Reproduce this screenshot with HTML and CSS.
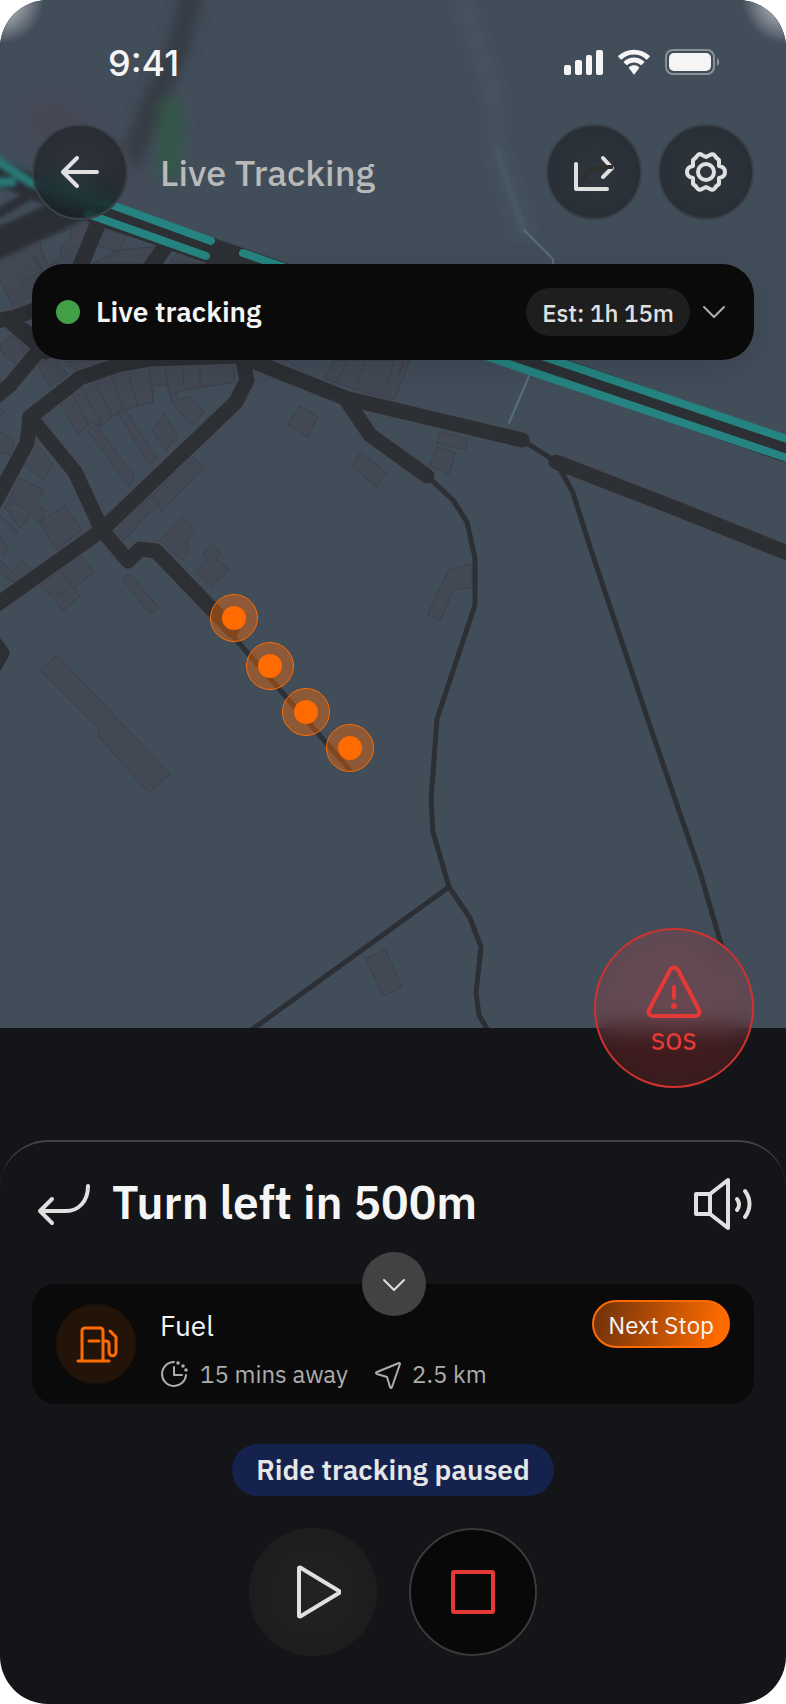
FILE: index.html
```html
<!DOCTYPE html>
<html lang="en">
<head>
<meta charset="utf-8">
<meta name="viewport" content="width=device-width, initial-scale=1">
<title>Live Tracking</title>
<link rel="stylesheet" href="styles.css">
</head>
<body>
<main class="screen">
  <section class="map-area">
    <svg class="map" viewBox="0 0 786 1028" preserveAspectRatio="xMidYMin slice" aria-hidden="true">
      <defs>
        <filter id="soft" x="-30%" y="-30%" width="160%" height="160%"><feGaussianBlur stdDeviation="7"/></filter>
        <filter id="mild" x="-30%" y="-30%" width="160%" height="160%"><feGaussianBlur stdDeviation="2"/></filter>
      </defs>
      <rect width="786" height="1028" fill="#424d5a"/>

      <g class="building">
        <path d="M0 225L60 215L98 222L82 262L70 300L18 316L0 280z"/>
        <path d="M40 240L72 228L70 240L60 246L62 258L48 266L42 252z" fill="#424d5a"/>
        <path d="M10 256L26 250L70 300M22 282L44 270M26 250L20 240M44 276L34 254"/>
        <path d="M100 226L127 236L119 252L98 246M120 250L160 246L148 264L92 264z"/>
        <path d="M170 262L180 250L215 264z"/>
        <path d="M0 345L12 336L28 350L16 364L4 356zM12 336L20 330L32 346L28 350"/>
        <path d="M38 364L50 356L68 374L50 386z"/>
        <path d="M66 362L78 372L104 360z"/>
        <path d="M60 402L82 386L118 372L152 366L235 360L234 382L200 388L185 390L176 392L178 400L188 396L196 402L204 412L192 426L172 402L167 385L153 385L153 402L124 410L110 418L102 426L90 422L78 434z"/>
        <path d="M128 371L138 407M149 367L153 402M165 366L168 388M183 365L184 390M112 377L124 410M96 382L112 418M82 388L102 425M72 394L90 428M200 366L200 386"/>
        <path d="M88 431L96 424L124 463L135 474L129 486z"/>
        <path d="M118 412L124 408L157 458L150 465z"/>
        <path d="M152 430L164 414L178 436L166 450z"/>
        <path d="M28 444L36 444L53 464L44 480L26 466z"/>
        <path d="M20 478L44 490L36 506L46 510L40 522L14 502L4 510L12 494z"/>
        <path d="M4 506L20 528L30 516"/>
        <path d="M40 522L65 505L82 530L56 550z"/>
        <path d="M0 432L14 440L12 456L0 452M0 408L4 412L0 416M0 516L18 532L12 534M0 536L8 548L4 556L0 552"/>
        <path d="M0 560L12 572L22 560L32 570L20 582L12 582L0 572"/>
        <path d="M40 585L80 556L94 572L74 588L80 596L62 612L56 602L68 590L54 598zM62 572L74 588"/>
        <path d="M152 496L192 456L204 467L162 511zM175 472L186 484"/>
        <path d="M112 530L152 496L158 504L124 540z"/>
        <path d="M122 578L130 574L159 608L150 614z"/>
        <path d="M160 540L182 516L196 530L186 542L190 550L182 560z"/>
        <path d="M196 571L207 560L203 554L213 544L220 552L217 560L230 569L212 587z"/>
        <path d="M288 424L299 406L318 416L308 438z"/>
        <path d="M352 466L361 452L387 473L377 487z"/>
        <path d="M440 432L468 439L465 450L437 443zM437 447L456 453L449 474L430 466z"/>
        <path d="M285 360L304 370M324 378L334 360L410 360L394 400L376 396z"/>
        <path d="M336 382L348 360M352 392L366 360M394 360L388 384M404 362L398 376"/>
        <path d="M40 670L57 655L170 774L149 793L98 736L100 730z"/>
        <path d="M449 569L472 564L472 588L454 589L440 621L428 615z"/>
        <path d="M366 958L385 950L402 987L383 996z"/>
      </g>

      <g class="casing">
        <path d="M30 417L80 378L118 365L150 359L240 356L345 398L400 411L522 440M30 417L75 472L102 530L128 560L140 549L156 551L216 614M242 356L247 380L236 402L102 530L-8 608M30 417L27 443L-8 508M345 398L370 435L427 476M556 462L680 510L800 558M-8 395L10 385L40 348L8 318L40 304"/>
      </g>
      <g class="road">
        <path d="M30 417L80 378L118 365L150 359L240 356L345 398L400 411L522 440"/>
        <path d="M242 356L247 380L236 402L102 530L-8 608"/>
        <path d="M30 417L75 472L102 530L128 561L140 549L156 551L232 630"/>
        <path d="M30 417L27 443L-8 508"/>
        <path d="M345 398L370 435L427 476M556 462L680 510L800 558"/>
        <path d="M-8 400L10 385L44 344L8 320L50 304M-8 322L10 318M14 325L46 352"/>
        <path d="M-8 640L2 653L-8 670"/>
      </g>
      <g class="path">
        <path d="M232 635L350 770M522 440L558 463M558 465L573 493L591 550L649 723L700 872L719 937L726 958"/>
        <path d="M427 476L453 500L467 522L475 558L475 605L437 719L431 800L433 832L449 887L470 918L481 947L476 993L479 1015L489 1032M449 887L250 1031"/>
      </g>

      <g filter="url(#soft)">
        <path d="M196 -20L178 48L150 110L126 172" fill="none" stroke="#353a43" stroke-width="22"/>
        <path d="M160 100H185L183 178H157z" fill="#34564a"/>
        <path d="M12 98L60 84L100 112L150 190L130 205L90 170L20 150z" fill="#444a56"/>
      </g>
      <path d="M460 -10L482 60L495 100L497 150L510 190L524 230" fill="none" stroke="#465562" stroke-width="12" filter="url(#soft)"/>
      <path d="M497 150L510 190L524 230" fill="none" stroke="#4a5c68" stroke-width="4" filter="url(#mild)"/>
      <path d="M524 230L553 259V266M529 376L509 423" fill="none" stroke="#557079" stroke-width="2"/>

      <g filter="url(#mild)" fill="none" stroke="#2c2f34">
        <path d="M-20 252L100 196" stroke-width="30"/>
        <path d="M-10 218L60 178" stroke-width="10"/>
        <path d="M-20 165L40 190L110 215" stroke-width="24"/>
      </g>
      <g fill="none" stroke="#2c2f34">
        <path d="M101 216L78 272" stroke-width="16"/>
        <path d="M170 240L146 274" stroke-width="16"/>
        <path d="M96 211L786 449" stroke-width="26"/>
        <path d="M210 244L250 258L240 280L206 270z" fill="#2c2f34"/>
      </g>
      <g fill="none" stroke="#258481" stroke-width="8">
        <path d="M-10 156L30 182L70 196M-10 182L12 182" filter="url(#mild)" stroke="#287a78" stroke-width="9"/>
        <path d="M60 188L112 205L211 241M88 214L206 256M243 253L480 335L790 440M241 272L500 361L790 459"/>
      </g>
    </svg>
    <svg class="stops" viewBox="0 0 786 1028" preserveAspectRatio="xMidYMin slice" role="img" aria-label="Riders on the route">
      <g fill="#ff6b00" fill-opacity=".4" stroke="#ff6b00"><circle cx="234" cy="618" r="23.500"/><circle cx="270" cy="666" r="23.500"/><circle cx="306" cy="712" r="23.500"/><circle cx="350" cy="748" r="23.500"/></g>
      <g fill="#ff6b00"><circle cx="234" cy="618" r="12"/><circle cx="270" cy="666" r="12"/><circle cx="306" cy="712" r="12"/><circle cx="350" cy="748" r="12"/></g>
    </svg>

    <div class="overlay">
      <div class="status">
        <time class="clock">9:41</time>
        <svg width="158" height="28" viewBox="0 0 158 28" fill="#f5f5f5" aria-label="Signal, Wi-Fi and battery">
          <rect x="1" y="16" width="7" height="10" rx="2"/><rect x="12" y="11" width="7" height="15" rx="2"/><rect x="23" y="6" width="6" height="20" rx="2"/><rect x="33" y="1" width="7" height="25" rx="2"/>
          <path d="M71 5.500c4.600 0 8.900 1.800 12.200 4.900.3.200.6.200.9 0l2.600-2.700c.3-.3.300-.7 0-1C78 -1.300 64-1.300 55.300 6.700c-.3.300-.3.700 0 1l2.600 2.700c.3.200.6.200.9 0C62.100 7.300 66.400 5.500 71 5.500zM71 13.500c2.500 0 4.900.9 6.700 2.600.3.200.7.200.9 0l2.500-2.600c.3-.3.300-.7 0-1-5.700-5.300-14.500-5.300-20.200 0-.3.300-.3.700 0 1l2.500 2.600c.2.200.6.200.9 0 1.800-1.700 4.200-2.600 6.700-2.600zM76 18.200c.3.300.3.700 0 1l-4.500 6c-.2.300-.7.300-.9 0l-4.600-6c-.3-.3-.3-.7 0-1 2.900-2.600 7.100-2.600 10 0z"/>
          <rect x="103" y="1" width="48" height="24" rx="7" fill="none" stroke="#f5f5f5" stroke-opacity=".4" stroke-width="2"/>
          <rect x="106" y="4" width="42" height="18" rx="5"/><path d="M154 9v8c3-1.500 3-6.500 0-8z" fill-opacity=".4"/>
        </svg>
      </div>

      <header class="topbar">
        <button class="glass" aria-label="Back"><svg width="40" height="32" viewBox="0 0 40 32"><path d="M37 16H3M17 2L3 16l14 14"/></svg></button>
        <h1 class="title">Live Tracking</h1>
        <button class="glass" aria-label="Share"><svg width="48" height="48" viewBox="0 0 48 48"><path d="M6 16v25h31M33 10l9 10-9 9"/><path d="M13 33c4-10 12-15 30-14" stroke="#302f2e" stroke-linecap="butt"/></svg></button>
        <button class="glass" aria-label="Settings"><svg width="48" height="48" viewBox="0 0 48 48"><circle cx="24" cy="24" r="8"/><path d="M24 9L28 7Q31 5 33 8Q34 10 37 12V18Q43 19 43 24Q43 29 37 30V36Q34 38 33 40Q31 43 28 41L24 39L20 41Q17 43 15 40Q14 38 11 36V30Q5 29 5 24Q5 19 11 18V12Q14 10 15 8Q17 5 20 7z"/></svg></button>
      </header>

      <div class="tracking">
        <span class="dot"></span>
        <h2 class="tracking-label">Live tracking</h2>
        <span class="estimate">Est: 1h 15m</span>
        <button class="expand" aria-label="Show tracking details"><svg width="32" height="32" viewBox="0 0 32 32"><path d="M6 11l10 10 10-10"/></svg></button>
      </div>
    </div>

    <button class="sos">
      <svg width="60" height="56" viewBox="0 0 60 56" aria-hidden="true"><path d="M26 7c2-3.500 6-3.500 8 0l21 40c1.500 3-.5 6-4 6H9c-3.500 0-5.500-3-4-6z"/><path d="M30 24v11"/><circle cx="30" cy="43" r="3" fill="#e53935" stroke="none"/></svg>
      SOS
    </button>
  </section>

  <section class="sheet">
    <div class="turn">
      <svg width="56" height="48" viewBox="0 0 56 48" aria-hidden="true"><path d="M52 6c0 16-10 25-22 25H4M16 19L4 31l12 12"/></svg>
      <h2 class="turn-text">Turn left in 500m</h2>
      <button class="sound" aria-label="Voice guidance"><svg width="60" height="56" viewBox="0 0 60 56"><path d="M2 18h14v20H2zM16 18L34 4v48L16 38M43 23c3 4 3 7 0 11M51 15c6 8 6 18 0 26"/></svg></button>
    </div>

    <article class="stop">
      <button class="collapse" aria-label="Collapse"><svg width="32" height="32" viewBox="0 0 32 32"><path d="M6 12l10 10 10-10"/></svg></button>
      <div class="stop-icon"><svg width="48" height="48" viewBox="0 0 48 48" aria-hidden="true"><path d="M10 41V11q0-3 3-3h15q3 0 3 3v30M6 41h31M17 21h10M31 21h3q3 0 3 3v8c0 5 7 5 7 0V17l-6-6"/></svg></div>
      <div class="stop-body">
        <h3 class="stop-name">Fuel</h3>
        <ul class="facts">
          <li><svg width="32" height="32" viewBox="0 0 32 32" aria-hidden="true"><path d="M14 4a12 12 0 1 0 12 13"/><path d="M14 9v8h8"/><g fill="#adadad" stroke="none"><circle cx="18" cy="5" r="1.800"/><circle cx="23" cy="8" r="1.800"/><circle cx="26" cy="12" r="1.800"/></g></svg>15 mins away</li>
          <li><svg width="32" height="32" viewBox="0 0 32 32" aria-hidden="true"><path d="M27 5L5 14q-2 1 0 2l10 3 3 10q1 2 2 0l8-23q0-1-1-1z"/></svg>2.5 km</li>
        </ul>
      </div>
      <span class="badge">Next Stop</span>
    </article>

    <p class="paused">Ride tracking paused</p>
    <div class="controls">
      <button class="round play" aria-label="Resume"><svg width="56" height="56" viewBox="0 0 56 56"><path d="M14 4v48q1 1 2 0L54 29q1-1 0-2L16 4q-1-1-2 0z"/></svg></button>
      <button class="round halt" aria-label="Stop"><svg width="56" height="56" viewBox="0 0 56 56"><rect x="8" y="8" width="40" height="40" rx="1"/></svg></button>
    </div>
  </section>
</main>
</body>
</html>
```
FILE: styles.css
```css
* { box-sizing: border-box; }

body {
  margin: 0;
  background: #fff;
  color: #f5f5f5;
  font-family: "IBM Plex Sans", "Noto Sans", sans-serif;
}

h1, h2, h3, p, ul { margin: 0; padding: 0; }

svg {
  display: block;
  flex: none;
  stroke-linecap: round;
  stroke-linejoin: round;
}

button {
  display: grid;
  place-items: center;
  flex: none;
  margin: 0;
  padding: 0;
  border: 0;
  background: none;
  color: inherit;
  font: inherit;
  cursor: pointer;
}

.screen {
  display: flex;
  flex-direction: column;
  min-height: 100vh;
  overflow: hidden;
  border-radius: 48px;
  background: #141519;
}

.map-area {
  position: relative;
  flex: 1;
  min-height: 640px;
  margin-bottom: 112px;
}

.map, .stops {
  position: absolute;
  inset: 0;
  width: 100%;
  height: 100%;
}

.map .building { fill: #434954; stroke: #3b4049; stroke-width: 1; }
.map .casing { fill: none; stroke: #484b54; stroke-width: 18; }
.map .road { fill: none; stroke: #2c2f34; stroke-width: 15; }
.map .path { fill: none; stroke: #2c2f34; stroke-width: 5; }
.map g { stroke-linecap: round; }

.overlay {
  position: relative;
  display: flex;
  flex-direction: column;
  padding: 40px 32px 0;
  background:
    radial-gradient(circle at 0 0, rgb(255 255 255 / .8), transparent 44px) left top / 64px 64px no-repeat,
    radial-gradient(circle at 100% 0, rgb(255 255 255 / .8), transparent 44px) right top / 64px 64px no-repeat;
}

.status {
  display: flex;
  align-items: center;
  justify-content: space-between;
  height: 46px;
  padding: 0 33px 0 76px;
}

.clock { font: 500 36px/46px Inter, sans-serif; }

.topbar {
  display: flex;
  align-items: center;
  gap: 16px;
  margin: 38px 0 44px;
}

.title {
  flex: 1;
  padding: 2px 0 0 16px;
  color: #b9b9b9;
  font-size: 36px;
  font-weight: 500;
  line-height: 48px;
}

.glass {
  width: 96px;
  height: 96px;
  border: 2px solid #3b4149;
  border-radius: 50%;
  background: radial-gradient(circle, rgb(10 10 10 / .35), rgb(10 10 10 / .48));
  backdrop-filter: blur(12px);
}

.glass svg { fill: none; stroke: #e0e0e0; stroke-width: 4; }

.tracking {
  display: flex;
  align-items: center;
  height: 96px;
  padding: 0 24px;
  border-radius: 32px;
  background: #0a0a0a;
  box-shadow: 0 8px 32px rgb(10 10 10 / .12);
}

.dot {
  width: 24px;
  height: 24px;
  border-radius: 50%;
  background: #43a047;
}

.tracking-label {
  flex: 1;
  padding-left: 16px;
  font-size: 28px;
  font-weight: 600;
  line-height: 40px;
}

.estimate {
  margin-right: 8px;
  padding: 2px 16px 0;
  border-radius: 24px;
  background: #1e1e1e;
  color: #e0e0e0;
  font-size: 24px;
  font-weight: 500;
  line-height: 46px;
}

.expand svg { fill: none; stroke: #adadad; stroke-width: 2; }

.sos {
  position: absolute;
  right: 32px;
  bottom: -60px;
  width: 160px;
  height: 160px;
  align-content: center;
  gap: 6px;
  padding-top: 4px;
  border: 2px solid #d0322f;
  border-radius: 50%;
  background: radial-gradient(circle, rgb(229 57 53 / .24), rgb(229 57 53 / .16));
  backdrop-filter: blur(12px);
  color: #e53935;
  font-size: 24px;
  font-weight: 500;
  line-height: 32px;
}

.sos svg { fill: none; stroke: #e53935; stroke-width: 4; }

.sheet {
  display: flex;
  flex-direction: column;
  align-items: center;
  padding: 30px 32px 48px;
  border-top: 2px solid #434345;
  border-radius: 48px 48px 0 0;
}

.turn {
  display: flex;
  align-items: center;
  gap: 20px;
  align-self: stretch;
  height: 64px;
  padding-left: 4px;
}

.turn svg { fill: none; stroke: #e0e0e0; stroke-width: 4; }

.turn-text {
  flex: 1;
  padding-bottom: 4px;
  font-size: 46px;
  font-weight: 600;
  line-height: 60px;
}

.stop {
  position: relative;
  display: flex;
  align-self: stretch;
  align-items: flex-start;
  min-height: 120px;
  margin: 48px 0 40px;
  padding: 16px 24px 8px;
  border-radius: 24px;
  background: #0a0a0a;
}

.collapse {
  position: absolute;
  top: -32px;
  left: 50%;
  width: 64px;
  height: 64px;
  margin-left: -31px;
  border-radius: 50%;
  background: #424242;
}

.collapse svg { fill: none; stroke: #e0e0e0; stroke-width: 2; }

.stop-icon {
  display: grid;
  place-items: center;
  width: 80px;
  height: 80px;
  margin-top: 4px;
  border-radius: 50%;
  background: #23140a;
}

.stop-icon svg { fill: none; stroke: #ff6b00; stroke-width: 3; }

.stop-body { flex: 1; padding-left: 24px; }

.stop-name {
  padding: 2px 0 8px;
  font-size: 28px;
  font-weight: 400;
  line-height: 48px;
}

.facts {
  display: flex;
  flex-wrap: wrap;
  gap: 24px;
  color: #adadad;
  font-size: 24px;
  line-height: 32px;
  list-style: none;
}

.facts li { display: flex; gap: 8px; }
.facts svg { fill: none; stroke: #adadad; stroke-width: 2; }

.badge {
  padding: 2px 14px 0;
  border: 2px solid #ff6b00;
  border-radius: 24px;
  background: linear-gradient(105deg, #6b300a, #ff6b00 92%);
  font-size: 24px;
  line-height: 42px;
}

.paused {
  padding: 0 24px;
  border-radius: 26px;
  background: #15224d;
  color: #e6e6e6;
  font-size: 28px;
  font-weight: 600;
  line-height: 52px;
}

.controls {
  display: flex;
  gap: 32px;
  margin-top: 32px;
}

.round {
  width: 128px;
  height: 128px;
  border-radius: 50%;
}

.round svg { fill: none; stroke-width: 4; }
.play { background: radial-gradient(circle, #232323, #1d1d1d 70%); }
.play svg { stroke: #e0e0e0; }
.halt { border: 2px solid #3a3a3a; background: #080808; }
.halt svg { stroke: #e53935; }
```
